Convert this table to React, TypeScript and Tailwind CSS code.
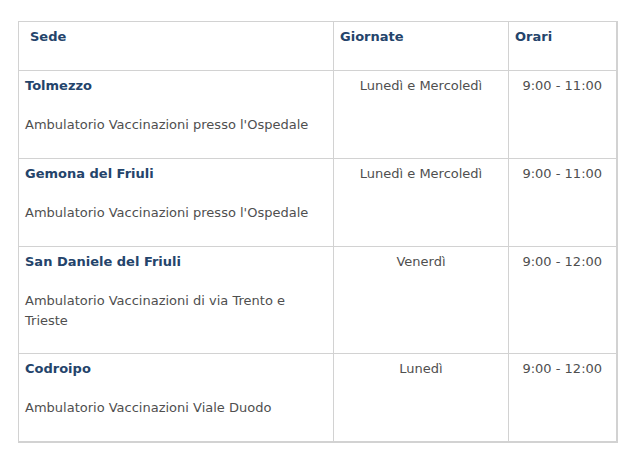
import React from 'react'

interface Sede {
  nome: string
  luogo: string
  giornate: string
  orari: string
}

const sedi: Sede[] = [
  { nome: 'Tolmezzo', luogo: "Ambulatorio Vaccinazioni presso l'Ospedale", giornate: 'Lunedì e Mercoledì', orari: '9:00 - 11:00' },
  { nome: 'Gemona del Friuli', luogo: "Ambulatorio Vaccinazioni presso l'Ospedale", giornate: 'Lunedì e Mercoledì', orari: '9:00 - 11:00' },
  { nome: 'San Daniele del Friuli', luogo: 'Ambulatorio Vaccinazioni di via Trento e Trieste', giornate: 'Venerdì', orari: '9:00 - 12:00' },
  { nome: 'Codroipo', luogo: 'Ambulatorio Vaccinazioni Viale Duodo', giornate: 'Lunedì', orari: '9:00 - 12:00' },
]

const App: React.FC = () => {
  return (
    <div className="min-h-[460px] w-[641px] bg-white pl-[18px] pt-[21px] font-['DejaVu_Sans',Verdana,sans-serif] text-[13px] leading-[19.5px] text-[#4f4f4f]">
      <table className="w-[598px] table-fixed border-collapse border-r-2 border-b-2 border-[#d2d2d2]">
        <colgroup>
          <col className="w-[315px]" />
          <col className="w-[175px]" />
          <col className="w-[108px]" />
        </colgroup>
        <thead>
          <tr className="h-[49px]">
            <th className="border border-[#d2d2d2] pl-[11px] pt-[5px] pb-[22px] text-left align-top font-bold text-[#24446b]">Sede</th>
            <th className="border border-[#d2d2d2] pl-[6px] pt-[5px] pb-[22px] text-left align-top font-bold text-[#24446b]">Giornate</th>
            <th className="border border-[#d2d2d2] pl-[6px] pt-[5px] pb-[22px] text-left align-top font-bold text-[#24446b]">Orari</th>
          </tr>
        </thead>
        <tbody>
          {sedi.map((s) => (
            <tr key={s.nome} className="h-[88px]">
              <td className="border border-[#d2d2d2] pl-[6px] pr-[7px] pt-[5px] pb-[23px] align-top">
                <div className="font-bold text-[#24446b]">{s.nome}</div>
                <div className="mt-[19.5px]">{s.luogo}</div>
              </td>
              <td className="border border-[#d2d2d2] px-[7px] pt-[5px] pb-[23px] text-center align-top">{s.giornate}</td>
              <td className="border border-[#d2d2d2] px-[7px] pt-[5px] pb-[23px] text-center align-top">{s.orari}</td>
            </tr>
          ))}
        </tbody>
      </table>
    </div>
  )
}

export default App
